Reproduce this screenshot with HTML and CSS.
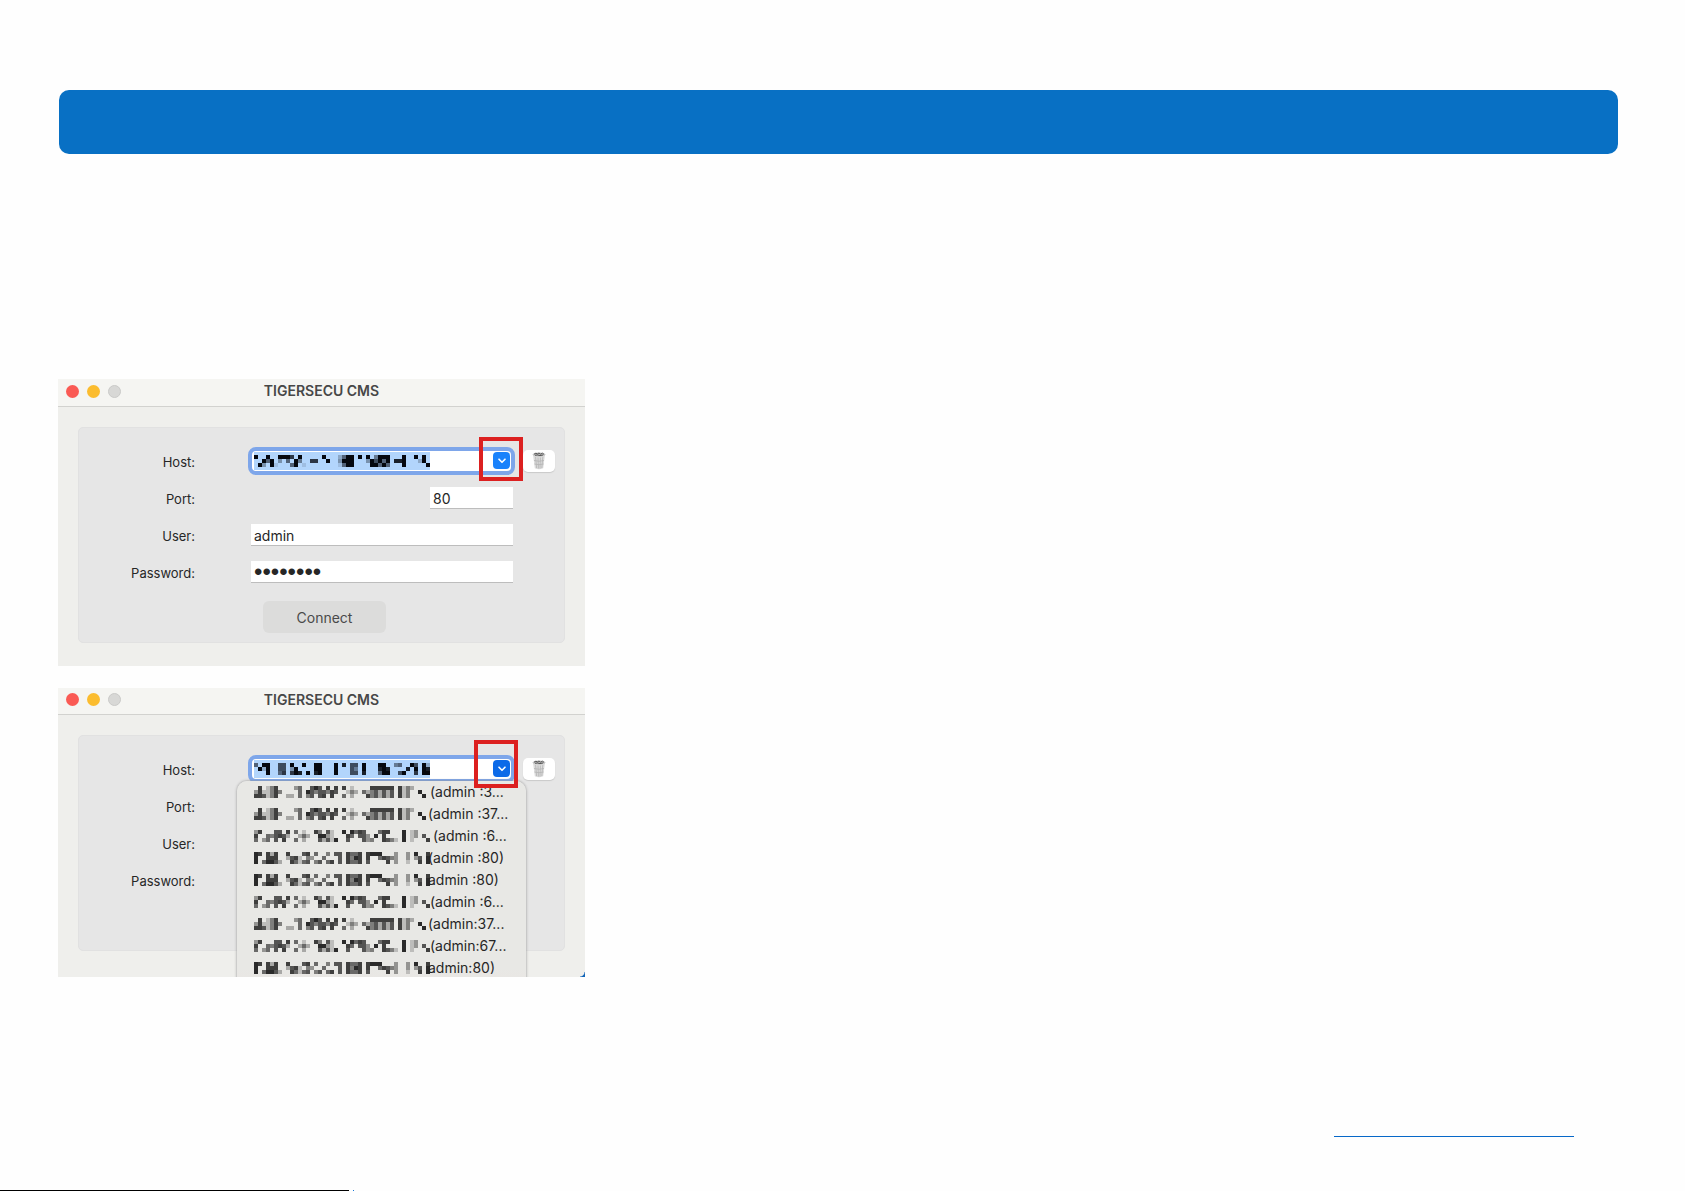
FILE: index.html
```html
<!DOCTYPE html>
<html lang="en">
<head>
    <meta charset="UTF-8">
    <meta name="viewport" content="width=device-width, initial-scale=1.0">
    <title>TIGERSECU CMS</title>
    <link rel="stylesheet" href="styles.css">
    <script src="mosaic.js" defer></script>
</head>
<body>
    <header class="banner"></header>

    <main class="content">
        <!-- Login window -->
        <section class="window">
            <div class="titlebar">
                <span class="lights"><i class="light red"></i><i class="light yellow"></i><i class="light gray"></i></span>
                <h2 class="title">TIGERSECU CMS</h2>
            </div>
            <form class="panel">
                <label for="host1">Host:</label>
                <div class="host-row">
                    <div class="combo">
                        <span class="selection"><svg class="mosaic" data-pattern="hostA"></svg></span>
                        <input class="combo-input" id="host1" type="text">
                        <button class="chevron" type="button" aria-label="Show hosts">
                            <svg width="8" height="6" viewBox="0 0 8 6"><path d="M1 1.2 4 4.3 7 1.2" fill="none" stroke="#fff" stroke-width="1.6" stroke-linecap="round" stroke-linejoin="round"/></svg>
                        </button>
                        <span class="marker"></span>
                    </div>
                    <button class="trash" type="button" aria-label="Delete host">
                        <svg width="14" height="18" viewBox="0 0 14 18">
                            <path d="M1 2.5 2.8 16.2Q7 18.4 11.2 16.2L13 2.5Z" fill="#dcdcdc"/>
                            <path d="M3.6 5 4.6 16M6 5.5 6.4 16.5M8.4 5.5 8 16.5M10.8 5 9.8 16M2 8.5Q7 10 12 8.5M2.4 12Q7 13.4 11.6 12" fill="none" stroke="#b4b4b4" stroke-width=".8"/>
                            <ellipse cx="7" cy="2.6" rx="6.1" ry="1.7" fill="#bbb" stroke="#ccc" stroke-width=".8"/>
                            <path d="M2 2.2 4 1.1 5.2 2 7 1 8.5 2.1 10.5 1.2 12 2.3M3 3.3 5.5 3 8 3.6 11 3" fill="none" stroke="#4c4c4c" stroke-width=".9"/>
                        </svg>
                    </button>
                </div>
                <label for="port1">Port:</label>
                <input class="field port" id="port1" type="text" value="80">
                <label for="user1">User:</label>
                <input class="field" id="user1" type="text" value="admin">
                <label for="pass1">Password:</label>
                <input class="field password" id="pass1" type="password" value="password">
                <button class="connect" type="button">Connect</button>
            </form>
        </section>

        <!-- Same window with the host list opened -->
        <section class="window">
            <div class="titlebar">
                <span class="lights"><i class="light red"></i><i class="light yellow"></i><i class="light gray"></i></span>
                <h2 class="title">TIGERSECU CMS</h2>
            </div>
            <form class="panel">
                <label for="host2">Host:</label>
                <div class="host-row">
                    <div class="combo">
                        <span class="selection"><svg class="mosaic" data-pattern="hostB"></svg></span>
                        <input class="combo-input" id="host2" type="text">
                        <button class="chevron pressed" type="button" aria-label="Hide hosts">
                            <svg width="8" height="6" viewBox="0 0 8 6"><path d="M1 1.2 4 4.3 7 1.2" fill="none" stroke="#fff" stroke-width="1.6" stroke-linecap="round" stroke-linejoin="round"/></svg>
                        </button>
                        <span class="marker marker-open"></span>
                        <ul class="menu">
                            <li><button class="item spaced" type="button"><svg class="mosaic" data-pattern="itemA"></svg>(admin :3...</button></li>
                            <li><button class="item" type="button"><svg class="mosaic" data-pattern="itemA"></svg>(admin :37...</button></li>
                            <li><button class="item wide" type="button"><svg class="mosaic" data-pattern="itemB"></svg>(admin :6...</button></li>
                            <li><button class="item" type="button"><svg class="mosaic" data-pattern="itemC"></svg>(admin :80)</button></li>
                            <li><button class="item" type="button"><svg class="mosaic" data-pattern="itemC"></svg>admin :80)</button></li>
                            <li><button class="item spaced" type="button"><svg class="mosaic" data-pattern="itemB"></svg>(admin :6...</button></li>
                            <li><button class="item" type="button"><svg class="mosaic" data-pattern="itemA"></svg>(admin:37...</button></li>
                            <li><button class="item spaced" type="button"><svg class="mosaic" data-pattern="itemB"></svg>(admin:67...</button></li>
                            <li><button class="item" type="button"><svg class="mosaic" data-pattern="itemC"></svg>admin:80)</button></li>
                        </ul>
                    </div>
                    <button class="trash" type="button" aria-label="Delete host">
                        <svg width="14" height="18" viewBox="0 0 14 18">
                            <path d="M1 2.5 2.8 16.2Q7 18.4 11.2 16.2L13 2.5Z" fill="#dcdcdc"/>
                            <path d="M3.6 5 4.6 16M6 5.5 6.4 16.5M8.4 5.5 8 16.5M10.8 5 9.8 16M2 8.5Q7 10 12 8.5M2.4 12Q7 13.4 11.6 12" fill="none" stroke="#b4b4b4" stroke-width=".8"/>
                            <ellipse cx="7" cy="2.6" rx="6.1" ry="1.7" fill="#bbb" stroke="#ccc" stroke-width=".8"/>
                            <path d="M2 2.2 4 1.1 5.2 2 7 1 8.5 2.1 10.5 1.2 12 2.3M3 3.3 5.5 3 8 3.6 11 3" fill="none" stroke="#4c4c4c" stroke-width=".9"/>
                        </svg>
                    </button>
                </div>
                <span class="label">Port:</span>
                <span></span>
                <span class="label">User:</span>
                <span></span>
                <span class="label">Password:</span>
                <span></span>
            </form>
            <span class="corner"></span>
        </section>
    </main>

    <footer class="footer">
        <a class="footer-link" href="#" aria-label="Website"></a>
        <div class="edge"><i class="edge-line"></i><i class="edge-dot"></i></div>
    </footer>
</body>
</html>
```

FILE: styles.css
```css
* {
    box-sizing: border-box;
}
body {
    margin: 0;
    min-height: 100vh;
    display: flex;
    flex-direction: column;
    background: #fefefe;
    color: #262626;
    font-family: Inter, "Liberation Sans", sans-serif;
    font-size: 14px;
}
button,
input {
    font: inherit;
    color: inherit;
    border: none;
    padding: 0;
    margin: 0;
    outline: none;
}
.banner {
    height: 64px;
    margin: 90px 67px 0 59px;
    border-radius: 10px;
    background: #0870c4;
}
.content {
    display: flex;
    flex-direction: column;
    gap: 22px;
    padding: 225px 58px 0;
}

/* Window */
.window {
    position: relative;
    width: 100%;
    max-width: 527px;
    padding-bottom: 23px;
    overflow: hidden;
    background: #efefec;
}
.window + .window {
    padding-bottom: 26px;
}
.titlebar {
    display: grid;
    grid-template-columns: 1fr auto 1fr;
    align-items: center;
    height: 28px;
    padding: 0 8px 3px;
    background: #f5f5f2;
    border-bottom: 1px solid #d2d2cf;
}
.window + .window .titlebar {
    height: 27px;
}
.lights {
    display: flex;
    gap: 8px;
}
.light {
    width: 13px;
    height: 13px;
    border-radius: 50%;
}
.red {
    background: #fa5a54;
}
.yellow {
    background: #fbbc2e;
}
.gray {
    background: #d8d8d6;
    border: 1px solid #cacac8;
}
.title {
    margin: 0;
    font-size: 14px;
    line-height: 20px;
    font-weight: 600;
    color: #474747;
}

/* Form */
.panel {
    display: grid;
    grid-template-columns: 116px 1fr;
    grid-auto-rows: 37px;
    column-gap: 56px;
    align-items: center;
    min-height: 216px;
    margin: 20px 20px 0;
    padding: 14px 10px 0 0;
    background: #e6e6e6;
    border: 1px solid #e1e1e1;
    border-radius: 5px;
}
.panel label,
.label {
    padding-top: 2px;
    text-align: right;
    font-size: 13px;
    line-height: 20px;
}
.field {
    width: 262px;
    height: 22px;
    padding: 2px 3px 0;
    background: #fff;
    border-bottom: 1px solid #bdbdbd;
}
.port {
    width: 83px;
    margin-left: 179px;
}
.password {
    font-family: "Liberation Sans", sans-serif;
    font-size: 24px;
}
.host-row {
    display: flex;
    align-items: center;
    gap: 8px;
}
.combo {
    position: relative;
    display: flex;
    align-items: center;
    width: 267px;
    height: 28px;
    margin-left: -3px;
    padding-right: 1px;
    background: #fff;
    border: 4px solid #7ea6ea;
    border-radius: 8px;
}
.selection {
    display: flex;
    align-items: center;
    height: 18px;
    margin-left: 2px;
    background: #b2d5fc;
}
.mosaic {
    display: block;
    flex: none;
    width: 176px;
    height: 12px;
}
.combo-input {
    flex: 1;
    min-width: 0;
    height: 18px;
    background: transparent;
}
.chevron {
    display: flex;
    align-items: center;
    justify-content: center;
    width: 17px;
    height: 17px;
    border-radius: 4px;
    background: #1a82fb;
}
.pressed {
    background: #0c6ae8;
}
.trash {
    display: flex;
    align-items: center;
    justify-content: center;
    width: 32px;
    height: 22px;
    border-radius: 5px;
    background: #fff;
    box-shadow: 0 1px 1px #c9c9c9;
}
.connect {
    grid-column: 2;
    width: 123px;
    height: 32px;
    margin-left: 12px;
    margin-top: 16px;
    padding-top: 2px;
    border-radius: 6px;
    background: #dcdcdb;
    color: #4a4a4a;
}

/* Red frame round the drop-down arrow */
.marker {
    position: absolute;
    z-index: 2;
    top: -14px;
    right: -12px;
    width: 44px;
    height: 44px;
    border: 4px solid #dc2020;
}
.marker-open {
    top: -19px;
    right: -7px;
    height: 48px;
}

/* Host list */
.menu {
    position: absolute;
    z-index: 1;
    top: 22px;
    left: -15px;
    width: 289px;
    height: 220px;
    margin: 0;
    padding: 0;
    list-style: none;
    background: linear-gradient(#e8e8e5 85%, #ebe4e1);
    border-radius: 10px;
    box-shadow: 0 0 3px #8f8f8f;
}
.item {
    display: flex;
    align-items: center;
    width: 100%;
    height: 22px;
    padding-left: 17px;
    background: none;
    white-space: nowrap;
}
.item .mosaic {
    margin-right: -2px;
}
.spaced {
    gap: 2px;
}
.wide {
    gap: 5px;
}
.corner {
    position: absolute;
    right: 0;
    bottom: 0;
    width: 5px;
    height: 5px;
    background: radial-gradient(circle at 0 0, transparent 4px, #1265b8 5px);
}

/* Footer */
.footer {
    display: flex;
    flex-direction: column;
    justify-content: space-between;
    flex: 1;
    padding-top: 159px;
}
.footer-link {
    width: 240px;
    margin-left: auto;
    margin-right: 111px;
    border-bottom: 1px solid #0768c8;
}
.edge {
    display: flex;
    height: 1px;
    gap: 4px;
}
.edge-line {
    width: 349px;
    background: #000;
}
.edge-dot {
    width: 1px;
    background: #1675d8;
}
```

FILE: mosaic.js
```js
// Each digit is the darkness of one 4px cell, 0 is empty and 9 is black
const patterns = {
    hostA: [
        '90090099970900000900025990909049990009009090',
        '00959030509400770090039990003969590889000290',
        '09309100059010000000015990000995950009000009'
    ],
    hostB: [
        '50990066090090099000908066090009900450096092',
        '09290066039000099000900064090008980000809098',
        '00090057079809089000900066080005990069007099'
    ],
    itemA: [
        '08025800004600797080808020000888888082530000',
        '48225850000609757758700253063573737082500900',
        '88725800330605707808006030008573737082500090'
    ],
    itemB: [
        '48000770806020085072009096870006880009024000',
        '80065787300363009942000860774090800009024070',
        '60460708006030007372900700074500875209020008'
    ],
    itemC: [
        '98083800800078060050770866808999000400409008',
        '90088800378205400600070859808006875400404709',
        '90699730086267057068070866807000080400200809'
    ]
};

document.querySelectorAll('.mosaic').forEach((svg) => {
    const rows = patterns[svg.dataset.pattern];
    const inField = svg.dataset.pattern.startsWith('host');
    svg.setAttribute('viewBox', '0 0 176 12');
    rows.forEach((row, y) => {
        [...row].forEach((value, x) => {
            if (value === '0') return;
            const cell = document.createElementNS('http://www.w3.org/2000/svg', 'rect');
            cell.setAttribute('x', x * 4);
            cell.setAttribute('y', y * 4);
            cell.setAttribute('width', 4);
            cell.setAttribute('height', 4);
            cell.setAttribute('fill', inField ? '#05080f' : '#2a2a2a');
            cell.setAttribute('fill-opacity', value / 9);
            svg.appendChild(cell);
        });
    });
});
```
